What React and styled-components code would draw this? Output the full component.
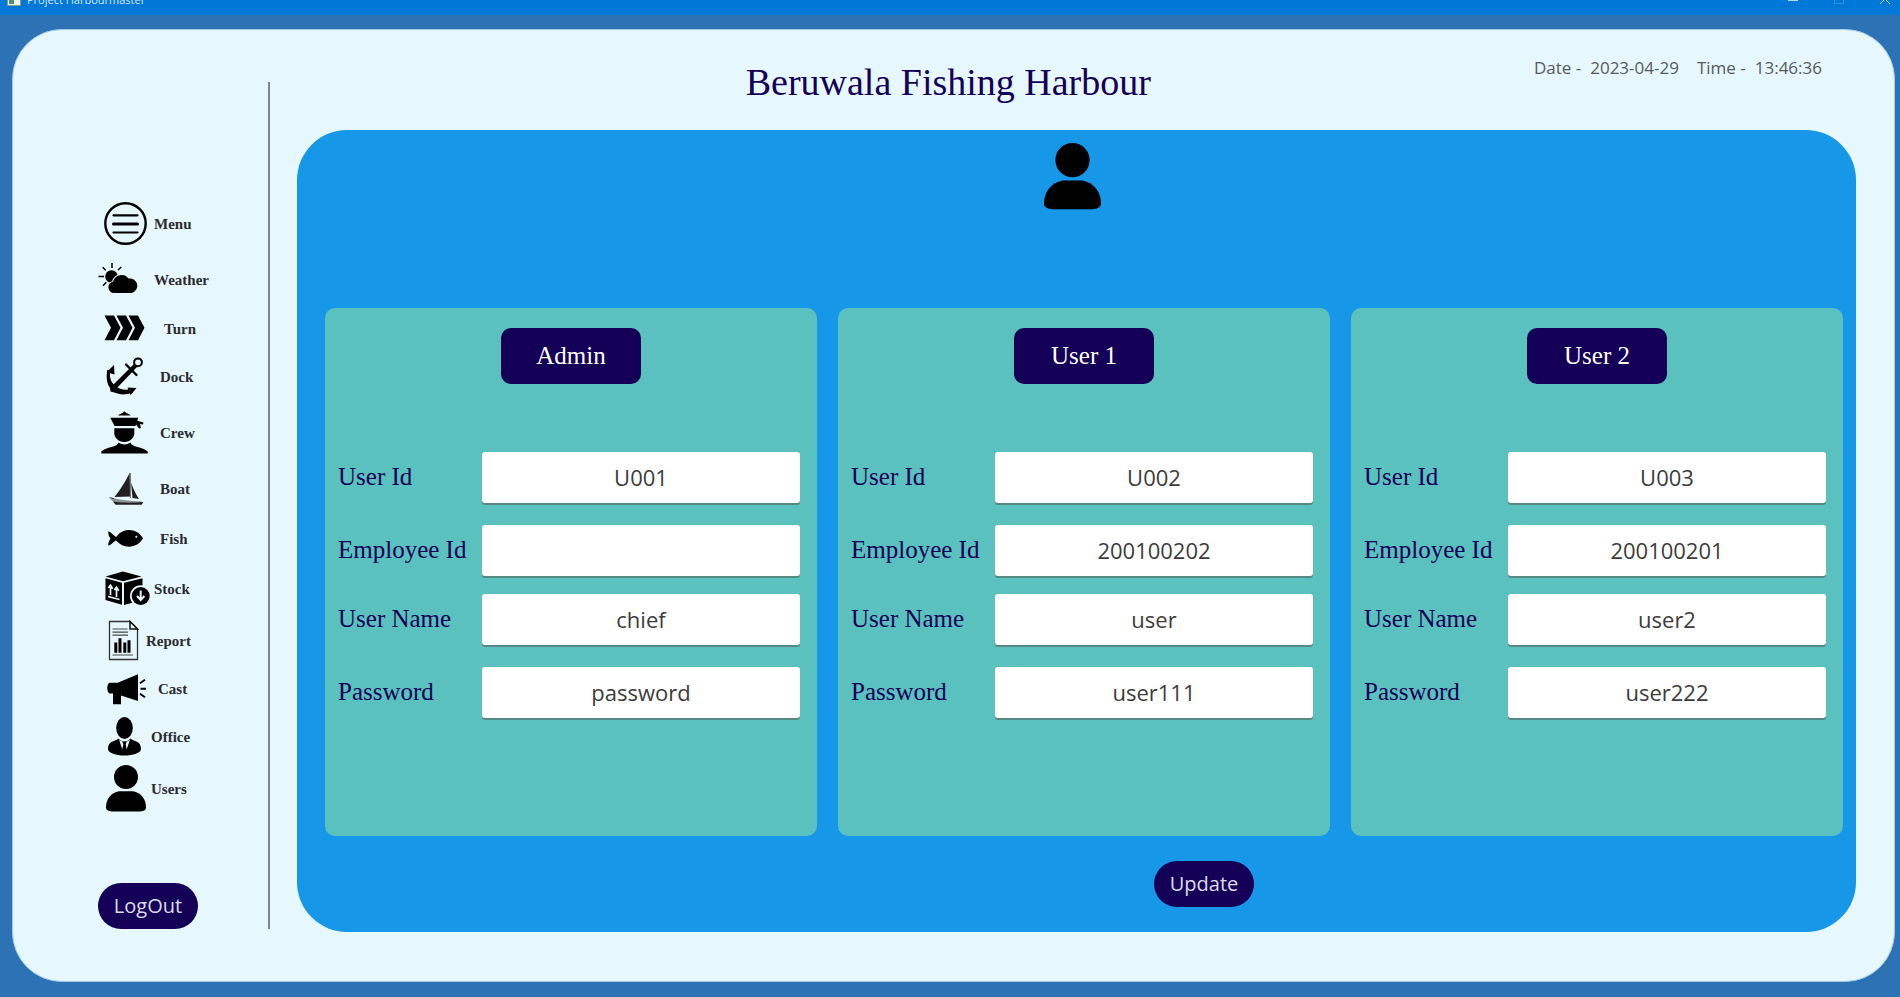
import React, { useId } from "react";
import styled, { createGlobalStyle } from "styled-components";

const navy = "#150058";
const paper = "#e6f8fd";
const serif = `"Liberation Serif", serif`;
const sans = `"Open Sans", "Noto Sans", sans-serif`;

const GlobalStyle = createGlobalStyle`
  *, *::before, *::after { box-sizing: border-box; }
  body { margin: 0; background: #2d72b4; font-family: ${sans}; }
  button, input { font: inherit; margin: 0; }
`;

const Window = styled.div`
  min-height: 100vh;
  display: flex;
  flex-direction: column;
  background: #2d72b4;
  border-bottom: 1px solid #0d4478;
`;

const TitleBar = styled.header`
  height: 15px;
  overflow: hidden;
  display: flex;
  align-items: flex-end;
  justify-content: space-between;
  padding: 0 8px 0 7px;
  background: #0078d7;
  color: #d3e8f8;
`;

const TitleGroup = styled.div`
  display: flex;
  align-items: center;
  gap: 6px;
  height: 30px;
  font-size: 11px;
  line-height: 30px;
`;

const Controls = styled.div`
  display: flex;
  height: 30px;
  gap: 32px;
`;

const Control = styled.button`
  width: 14px;
  height: 30px;
  padding: 0;
  border: 0;
  background: none;
  color: ${(p) => (p.disabled ? "#2b90e0" : "#b5d9f4")};

  svg { display: block; }
`;

const Frame = styled.div`
  flex: 1;
  display: flex;
  margin: 14px 5px 15px 12px;
  border: 1px solid #a3cbe8;
  border-radius: 50px;
  background: ${paper};
`;

const Sidebar = styled.aside`
  width: 257px;
  flex: none;
  margin: 52px 0;
  padding: 114px 0 0 84px;
  border-right: 2px solid #7b8488;
`;

const NavList = styled.ul`
  margin: 0;
  padding: 0;
  list-style: none;
`;

const NavItem = styled.li`
  height: ${(p) => p.$height}px;
  display: flex;
  align-items: center;
`;

const NavLink = styled.a`
  display: flex;
  align-items: center;
  gap: ${(p) => p.$gap}px;
  color: #2b2b30;
  font: bold 15px/20px ${serif};
  text-decoration: none;
`;

const NavIcon = styled.svg`
  width: 49px;
  height: 48px;
  flex: none;
  overflow: visible;
  fill: #000;
`;

const PillButton = styled.button`
  width: 100px;
  height: 46px;
  padding: 0;
  border: 0;
  border-radius: 23px;
  background: ${navy};
  color: #dcdce8;
  font-size: 20px;
  line-height: 28px;
`;

const LogoutRow = styled.div`
  padding: 67px 0 0 1px;
`;

const Main = styled.main`
  flex: 1;
  min-width: 0;
  display: flex;
  flex-direction: column;
  padding: 0 38px 49px 27px;
`;

const Header = styled.div`
  height: 100px;
  display: grid;
  grid-template-columns: 7fr auto 11fr;
`;

const Title = styled.h1`
  grid-column: 2;
  margin: 0;
  padding-top: 30px;
  color: ${navy};
  font: normal 38px/44px ${serif};
  white-space: nowrap;
`;

const Clock = styled.div`
  display: flex;
  justify-content: flex-end;
  gap: 18px;
  padding: 26px 34px 0 0;
  color: #565a5c;
  font-size: 17px;
  line-height: 24px;
  white-space: nowrap;
`;

const ClockPart = styled.span`
  display: flex;
  gap: 9px;
`;

const Board = styled.section`
  flex: 1;
  display: flex;
  flex-direction: column;
  padding: 13px 13px 25px 28px;
  border-radius: 50px;
  background: #1797e7;
`;

const AvatarRow = styled.div`
  display: flex;
  justify-content: center;
  padding: 0 24px 98px 0;
`;

const Avatar = styled.svg`
  width: 57px;
  height: 67px;
  display: block;
`;

const Cards = styled.div`
  flex: 1;
  display: grid;
  grid-template-columns: repeat(3, minmax(0, 1fr));
  gap: 21px;
`;

const Card = styled.form`
  display: flex;
  flex-direction: column;
  padding: 20px 0 40px;
  border-radius: 10px;
  background: #5ac1be;
`;

const RoleButton = styled.button`
  align-self: center;
  width: 140px;
  height: 56px;
  padding: 0;
  border: 0;
  border-radius: 10px;
  background: ${navy};
  color: #fff;
  font: 25px/28px ${serif};
`;

const Fields = styled.div`
  display: flex;
  flex-direction: column;
  gap: 16px;
  padding: 68px 17px 0 13px;
`;

const FieldGroup = styled.div`
  display: flex;
  flex-direction: column;
  gap: 20px;
`;

const FieldRow = styled.div`
  height: 53px;
  display: grid;
  grid-template-columns: 144px minmax(0, 1fr);
  align-items: start;
`;

const Label = styled.label`
  color: ${navy};
  font: 25px/50px ${serif};
`;

const TextInput = styled.input`
  width: 100%;
  height: 51px;
  padding: 0 12px 2px;
  border: 0;
  border-radius: 3px;
  outline: 0;
  background: #fff;
  box-shadow: 0 2px 0 #568886;
  color: #3c3c3c;
  font-size: 22px;
  text-align: center;
`;

const UpdateRow = styled.div`
  display: flex;
  justify-content: center;
  padding: 25px 0 0 240px;
`;

const UserShape = () => (
  <>
    <circle cx="29" cy="12" r="12" />
    <path d="M22 26.300h14c8 1.500 13 8 13 16c0 3-2.500 4.200-8 4.200H17c-5.500 0-8-1.200-8-4.200c0-8 5-14.500 13-16z" />
  </>
);

const icons = {
  menu: (
    <g fill="none" stroke="#000" strokeLinecap="round">
      <circle cx="28.500" cy="23.500" r="20.200" strokeWidth="2.400" />
      <path d="M16.500 15.300h24M16.500 32.500h24" strokeWidth="2.200" />
      <path d="M16.500 24h24" strokeWidth="3" />
    </g>
  ),
  weather: (
    <>
      <circle cx="14.500" cy="20.500" r="6.300" />
      <path
        d="M15 7v5M1.500 20.500H7M5.700 11.300l3 3M24.300 11L21 14M6 29.700l3.300-3.400"
        stroke="#000"
        strokeWidth="1.500"
        fill="none"
      />
      <path
        d="M17 37a5.700 5.700 0 0 1-1-11.300A8.800 8.800 0 0 1 31.500 22.600A7.200 7.200 0 1 1 34.500 37z"
        stroke={paper}
        strokeWidth="2"
        paintOrder="stroke"
      />
    </>
  ),
  turn: (
    <>
      {[0, 12, 24].map((x) => (
        <path key={x} d={`M${7.5 + x} 10.500h9.500l6.500 12.300l-6.500 12.500H${7.5 + x}l6.500-12.500z`} />
      ))}
    </>
  ),
  dock: (
    <>
      <circle cx="41" cy="9.300" r="3.900" fill="none" stroke="#000" strokeWidth="2" />
      <path d="M37 11L40 14L18 37L13 35z" />
      <path d="M38.500 12.500L16 36" stroke="#000" strokeWidth="2.600" />
      <path d="M29 11.500l10.500 10.500" stroke="#000" strokeWidth="2.400" strokeLinecap="round" />
      <path d="M17 12l.5 9.500l-8-2.300z" />
      <path d="M30.500 34.500l9 .5l-6 7z" />
      <path d="M10.500 16.500L13 18C12.500 24 13.500 28.500 17 31.500C21 36 28 38 34.500 36L36 39.500C29 42 23 42 19 40L13.500 38.500L13 35C9.500 30 9 23 10.500 16.500z" />
    </>
  ),
  crew: (
    <>
      <path d="M21 6.500C23 4.500 26 4.500 27.300 2.300C29 4.500 32 4.500 33.700 6.500z" />
      <path d="M13.300 8.700h28L38.500 17h-21z" />
      <path d="M39.500 11.500l7 2l-.5 2l-3-.5l1 4l-2 .5l-3-4z" />
      <path d="M17.300 19.300h20v5C37.300 29 33 33 27.300 33S17.300 29 17.300 24.300z" />
      <path d="M21.500 33.500C25 36 30 36 33.500 33.500C34 38 46 38 50.700 42.500v2H4.300v-2C9 38 21 38 21.500 33.500z" />
    </>
  ),
  boat: (
    <g fill="#231f20">
      <path d="M32.700 7.500C29 16 23 25 17.500 32L33 31.500z" />
      <path d="M34 17.500C36 23 38.500 29 42 34L35.500 33z" />
      <path d="M33.500 8v25" stroke="#777" strokeWidth="1" />
      <path d="M12 32.300C22 35 34 36 45 36.500l-1.500 2.500H19C16.500 37 14 35 12 32.300z" fill="#8d9496" />
      <path d="M12 32l6 1.500l-2 .5zM16 36.500C25 38 36 38 46.500 37L44.500 39.800H18.500z" />
    </g>
  ),
  fish: (
    <>
      <path d="M18 24C22 17 27 15 32 15C38 15 43 18.500 46 23.300C43 28.500 38 31.700 32 31.700C27 31.700 22 29.500 18 24z" />
      <path d="M21 23.500C17 21 14 17 11.300 16.300C11 19 12 22 13.500 23.500C12 26 11 28 11.300 30.700C14 30 17 26.500 21 24z" />
      <circle cx="39.300" cy="21.700" r="1" fill={paper} />
    </>
  ),
  stock: (
    <>
      <path d="M26 6.500l18.500 5L26 16.300L8.500 11.500z" />
      <path d="M8.500 13.300l16.500 4.500v22L8.500 35z" />
      <path d="M27 17.800l18.500-4.500V35L27 40z" />
      <path
        d="M13.500 30V21M11.300 23l2.200-2.800l2.200 3.500M19.500 32V23M17.300 25l2.200-2.800l2.200 3.500M11 31.500l11.500 3"
        fill="none"
        stroke={paper}
        strokeWidth="1.700"
      />
      <circle cx="43.700" cy="31" r="10.700" fill={paper} />
      <circle cx="43.700" cy="31" r="9" />
      <path d="M43.700 25.500v9M40 31l3.700 4l3.700-4" fill="none" stroke={paper} strokeWidth="2" />
    </>
  ),
  report: (
    <>
      <path
        d="M12.500 4.500H33l7.500 7.500v30.500h-28z"
        fill="none"
        stroke="#333"
        strokeWidth="1.300"
      />
      <path d="M33 4.500l7.500 7.500H33z" fill={paper} stroke="#111" strokeWidth="1.500" />
      <path
        d="M15.500 12h15M15.500 15.200h15.500M15.500 18.200h15.500M15.500 38h20.500"
        stroke="#444"
        strokeWidth="1.200"
      />
      <path d="M17.300 25.500h3v10.300h-3zM21.500 21.300h3v14.500h-3zM26.300 25.500h3v10.300h-3zM30.500 23.300h3v12.500h-3z" />
    </>
  ),
  cast: (
    <>
      <path d="M41 9.300V36L24 30.500V39.300H16V28.500H12.500C9.500 27 9.500 19 12.500 17.700H20.700z" />
      <path
        d="M43 18.300l5-3.600M43.500 23.700h5.500M43 28.700l5 3.600"
        stroke="#000"
        strokeWidth="2"
      />
    </>
  ),
  office: (
    <>
      <ellipse cx="27.500" cy="15" rx="8.300" ry="11" />
      <path d="M21.500 25.500C25 29.500 30 29.500 33.500 25.500C38 29 44 28 44 36C44 40 36 42.500 27.500 42.500S11 40 11 36C11 28 17 29 21.500 25.500z" />
      <path d="M22 26.500C25 29.500 30 29.500 33 26.500L29.500 37H25.500z" fill={paper} />
      <path d="M25.300 28.500h4.400l-1 3l1.300 6h-5l1.300-6z" />
    </>
  ),
  users: <UserShape />,
};

const navItems = [
  { icon: "menu", text: "Menu", height: 56, gap: 8 },
  { icon: "weather", text: "Weather", height: 56, gap: 8 },
  { icon: "turn", text: "Turn", height: 42, gap: 18 },
  { icon: "dock", text: "Dock", height: 54, gap: 14 },
  { icon: "crew", text: "Crew", height: 58, gap: 14 },
  { icon: "boat", text: "Boat", height: 54, gap: 14 },
  { icon: "fish", text: "Fish", height: 46, gap: 14 },
  { icon: "stock", text: "Stock", height: 54, gap: 8 },
  { icon: "report", text: "Report", height: 50, gap: 0 },
  { icon: "cast", text: "Cast", height: 46, gap: 12 },
  { icon: "office", text: "Office", height: 50, gap: 5 },
  { icon: "users", text: "Users", height: 54, gap: 5 },
];

const accounts = [
  { role: "Admin", id: "U001", employee: "", name: "chief", password: "password" },
  { role: "User 1", id: "U002", employee: "200100202", name: "user", password: "user111" },
  { role: "User 2", id: "U003", employee: "200100201", name: "user2", password: "user222" },
];

function Field({ label, value }) {
  const id = useId();
  return (
    <FieldRow>
      <Label htmlFor={id}>{label}</Label>
      <TextInput id={id} type="text" defaultValue={value} />
    </FieldRow>
  );
}

function AccountCard({ account }) {
  return (
    <Card>
      <RoleButton type="button">{account.role}</RoleButton>
      <Fields>
        <FieldGroup>
          <Field label="User Id" value={account.id} />
          <Field label="Employee Id" value={account.employee} />
        </FieldGroup>
        <FieldGroup>
          <Field label="User Name" value={account.name} />
          <Field label="Password" value={account.password} />
        </FieldGroup>
      </Fields>
    </Card>
  );
}

export default function App() {
  return (
    <>
      <GlobalStyle />
      <Window>
        <TitleBar>
          <TitleGroup>
            <svg width="14" height="30" viewBox="0 0 14 30" aria-hidden="true">
              <rect x="0" y="8" width="14" height="13" fill="#8a9a90" />
              <rect x="1" y="8" width="12" height="12" fill="#f2f2ea" />
              <rect x="2" y="8" width="5" height="11" fill="#4f9070" />
            </svg>
            <span>Project Harbourmaster</span>
          </TitleGroup>
          <Controls>
            <Control type="button" aria-label="Minimize">
              <svg width="14" height="30" viewBox="0 0 14 30">
                <path d="M2 15.500h10" stroke="currentColor" />
              </svg>
            </Control>
            <Control type="button" aria-label="Maximize" disabled>
              <svg width="14" height="30" viewBox="0 0 14 30">
                <rect x="2.500" y="9.500" width="9" height="9" fill="none" stroke="currentColor" />
              </svg>
            </Control>
            <Control type="button" aria-label="Close">
              <svg width="14" height="30" viewBox="0 0 14 30">
                <path d="M2 9l10 10M12 9L2 19" stroke="currentColor" fill="none" />
              </svg>
            </Control>
          </Controls>
        </TitleBar>
        <Frame>
          <Sidebar>
            <nav aria-label="Main">
              <NavList>
                {navItems.map((item) => (
                  <NavItem key={item.text} $height={item.height}>
                    <NavLink href={`#${item.icon}`} $gap={item.gap}>
                      <NavIcon viewBox="0 0 49 48" aria-hidden="true">
                        {icons[item.icon]}
                      </NavIcon>
                      {item.text}
                    </NavLink>
                  </NavItem>
                ))}
              </NavList>
            </nav>
            <LogoutRow>
              <PillButton type="button">LogOut</PillButton>
            </LogoutRow>
          </Sidebar>
          <Main>
            <Header>
              <Title>Beruwala Fishing Harbour</Title>
              <Clock>
                <ClockPart>
                  <span>Date -</span>
                  <span>2023-04-29</span>
                </ClockPart>
                <ClockPart>
                  <span>Time -</span>
                  <span>13:46:36</span>
                </ClockPart>
              </Clock>
            </Header>
            <Board>
              <AvatarRow>
                <Avatar viewBox="9 0 40 47" aria-hidden="true">
                  <UserShape />
                </Avatar>
              </AvatarRow>
              <Cards>
                {accounts.map((account) => (
                  <AccountCard key={account.id} account={account} />
                ))}
              </Cards>
              <UpdateRow>
                <PillButton type="button">Update</PillButton>
              </UpdateRow>
            </Board>
          </Main>
        </Frame>
      </Window>
    </>
  );
}
